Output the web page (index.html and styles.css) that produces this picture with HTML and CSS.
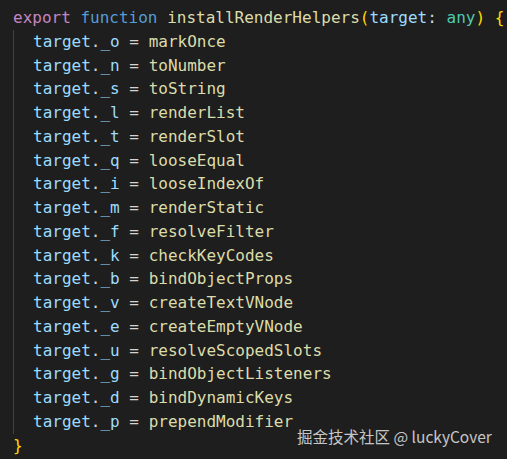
FILE: index.html
```html
<!DOCTYPE html>
<html>
<head>
<meta charset="utf-8">
<link rel="stylesheet" href="styles.css">
</head>
<body>
<div class="editor">
  <div class="line"><span class="kw">export</span> <span class="st">function</span> <span class="fn">installRenderHelpers</span><span class="br">(</span><span class="var">target</span><span class="op">:</span> <span class="ty">any</span><span class="br">)</span> <span class="br">{</span></div>
  <div class="body">
    <div class="line"><span class="var">target</span><span class="op">.</span><span class="var">_o</span> <span class="op">=</span> <span class="fn">markOnce</span></div>
    <div class="line"><span class="var">target</span><span class="op">.</span><span class="var">_n</span> <span class="op">=</span> <span class="fn">toNumber</span></div>
    <div class="line"><span class="var">target</span><span class="op">.</span><span class="var">_s</span> <span class="op">=</span> <span class="fn">toString</span></div>
    <div class="line"><span class="var">target</span><span class="op">.</span><span class="var">_l</span> <span class="op">=</span> <span class="fn">renderList</span></div>
    <div class="line"><span class="var">target</span><span class="op">.</span><span class="var">_t</span> <span class="op">=</span> <span class="fn">renderSlot</span></div>
    <div class="line"><span class="var">target</span><span class="op">.</span><span class="var">_q</span> <span class="op">=</span> <span class="fn">looseEqual</span></div>
    <div class="line"><span class="var">target</span><span class="op">.</span><span class="var">_i</span> <span class="op">=</span> <span class="fn">looseIndexOf</span></div>
    <div class="line"><span class="var">target</span><span class="op">.</span><span class="var">_m</span> <span class="op">=</span> <span class="fn">renderStatic</span></div>
    <div class="line"><span class="var">target</span><span class="op">.</span><span class="var">_f</span> <span class="op">=</span> <span class="fn">resolveFilter</span></div>
    <div class="line"><span class="var">target</span><span class="op">.</span><span class="var">_k</span> <span class="op">=</span> <span class="fn">checkKeyCodes</span></div>
    <div class="line"><span class="var">target</span><span class="op">.</span><span class="var">_b</span> <span class="op">=</span> <span class="fn">bindObjectProps</span></div>
    <div class="line"><span class="var">target</span><span class="op">.</span><span class="var">_v</span> <span class="op">=</span> <span class="fn">createTextVNode</span></div>
    <div class="line"><span class="var">target</span><span class="op">.</span><span class="var">_e</span> <span class="op">=</span> <span class="fn">createEmptyVNode</span></div>
    <div class="line"><span class="var">target</span><span class="op">.</span><span class="var">_u</span> <span class="op">=</span> <span class="fn">resolveScopedSlots</span></div>
    <div class="line"><span class="var">target</span><span class="op">.</span><span class="var">_g</span> <span class="op">=</span> <span class="fn">bindObjectListeners</span></div>
    <div class="line"><span class="var">target</span><span class="op">.</span><span class="var">_d</span> <span class="op">=</span> <span class="fn">bindDynamicKeys</span></div>
    <div class="line"><span class="var">target</span><span class="op">.</span><span class="var">_p</span> <span class="op">=</span> <span class="fn">prependModifier</span></div>
  </div>
  <div class="line"><span class="br">}</span></div>
  <div class="watermark">掘金技术社区 @ luckyCover</div>
</div>
</body>
</html>
```

FILE: styles.css
```css
html, body {
  margin: 0;
  padding: 0;
  background: #1e1e1e;
}
.editor {
  position: relative;
  width: 507px;
  height: 459px;
  box-sizing: border-box;
  padding: 6px 0 0 13px;
  font-family: "DejaVu Sans Mono", "Liberation Mono", monospace;
  font-size: 16px;
  line-height: 23.75px;
  color: #d4d4d4;
  overflow: hidden;
}
.line {
  white-space: pre;
  height: 23.75px;
}
.body {
  border-left: 1px solid #404040;
  padding-left: 19px;
}
.kw { color: #c586c0; }
.st { color: #569cd6; }
.fn { color: #dcdcaa; }
.br { color: #ffd700; }
.var { color: #9cdcfe; }
.op { color: #d4d4d4; }
.ty { color: #4ec9b0; }
.watermark {
  position: absolute;
  left: 297px;
  top: 426px;
  font-family: "Noto Sans CJK SC", "Noto Sans", sans-serif;
  font-size: 15.5px;
  line-height: 20px;
  color: rgba(230, 230, 230, 0.85);
  white-space: nowrap;
}
```
